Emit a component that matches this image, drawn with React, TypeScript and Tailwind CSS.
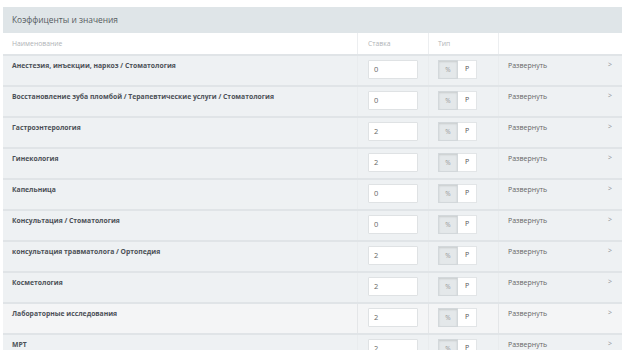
import React from 'react'

type Row = { name: string; rate: string; hover?: boolean }

const ROWS: Row[] = [
  { name: 'Анестезия, инъекции, наркоз / Стоматология', rate: '0' },
  { name: 'Восстановление зуба пломбой / Терапевтические услуги / Стоматология', rate: '0' },
  { name: 'Гастроэнтерология', rate: '2' },
  { name: 'Гинекология', rate: '2' },
  { name: 'Капельница', rate: '0' },
  { name: 'Консультация / Стоматология', rate: '0' },
  { name: 'консультация травматолога / Ортопедия', rate: '2' },
  { name: 'Косметология', rate: '2' },
  { name: 'Лабораторные исследования', rate: '2', hover: true },
  { name: 'МРТ', rate: '2' },
]

function RateRow({ row }: { row: Row }) {
  const cell = row.hover ? 'border-l border-[#e4e6e8]' : 'border-l border-[#e9ecee]'
  return (
    <div
      className={`grid grid-cols-[354px_71px_70px_1fr] h-[31px] border-t-2 border-[#e0e4e7] ${
        row.hover ? 'bg-[#f4f5f6]' : 'bg-[#eef1f3]'
      }`}
    >
      <div className="pl-[9px] pt-[4px] text-[6.8px] font-bold text-[#4b5056] leading-[12px] truncate">
        {row.name}
      </div>
      <div className={`pl-[10px] pt-[4px] ${cell}`}>
        <div className="w-[50px] h-[19px] bg-white border border-[#dfe2e4] rounded-[1px] pl-[5px] text-[7.5px] leading-[17px] text-[#666]">
          {row.rate}
        </div>
      </div>
      <div className={`pl-[9px] pt-[4px] ${cell}`}>
        <div className="flex h-[19px]">
          <div className="w-[20px] bg-[#e4e8ea] border border-[#d3d8db] shadow-[inset_0_1px_2px_rgba(0,0,0,0.12)] flex items-center justify-center text-[6.5px] text-[#999]">
            %
          </div>
          <div className="w-[19px] bg-white border border-l-0 border-[#e2e5e7] flex items-center justify-center text-[7px] text-[#555]">
            Р
          </div>
        </div>
      </div>
      <div className={`flex justify-between pl-[9px] pr-[10px] pt-[4px] ${cell}`}>
        <span className="text-[7px] text-[#666] leading-[12px]">Развернуть</span>
        <span className="text-[7px] text-[#8a8f93] leading-[10px]">&gt;</span>
      </div>
    </div>
  )
}

export default function App() {
  return (
    <div className="w-[628px] h-[350px] overflow-hidden bg-white pt-[7px] pl-[3px]" style={{ fontFamily: '"Open Sans", "Liberation Sans", sans-serif' }}>
      <div className="w-[619px]">
        <div className="h-[26px] bg-[#dfe5e8] pl-[9px] flex items-center text-[8.4px] text-[#555b61]">
          Коэффиценты и значения
        </div>
        <div className="grid grid-cols-[354px_71px_70px_1fr] h-[21px] bg-white text-[6.8px] text-[#b0b3b6] leading-[21px]">
          <div className="pl-[9px]">Наименование</div>
          <div className="pl-[10px] border-l border-[#eceef0]">Ставка</div>
          <div className="pl-[9px] border-l border-[#eceef0]">Тип</div>
          <div className="border-l border-[#eceef0]" />
        </div>
        {ROWS.map((r) => (
          <RateRow key={r.name} row={r} />
        ))}
      </div>
    </div>
  )
}
